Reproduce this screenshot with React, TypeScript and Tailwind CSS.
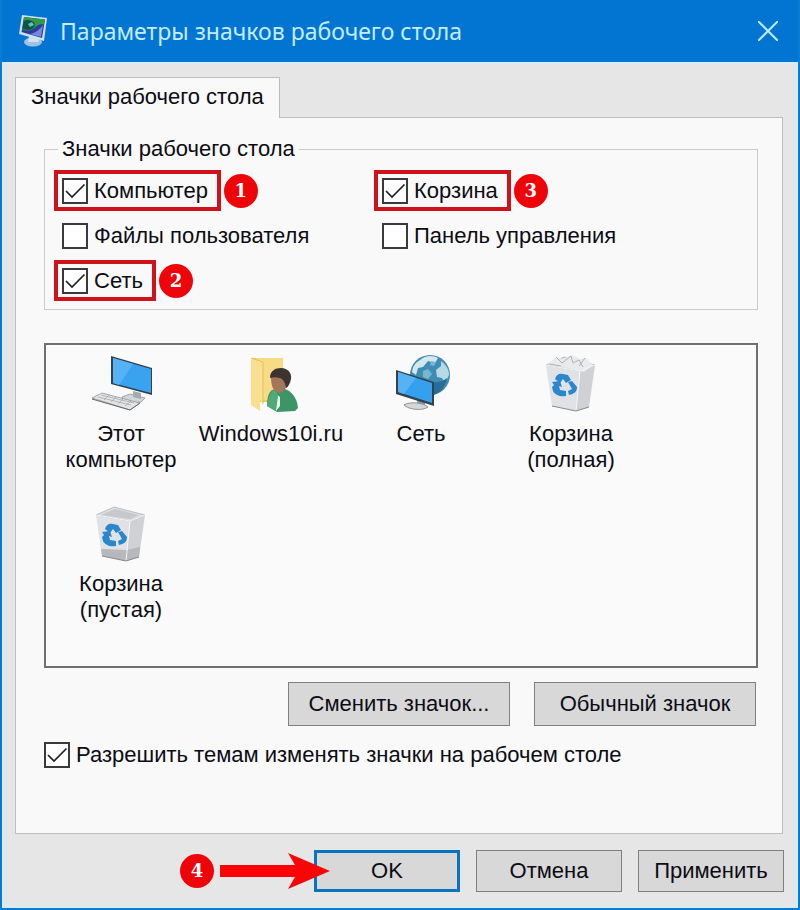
import { useState } from 'react'
import type { ReactNode } from 'react'

interface CheckOptionProps {
  id: string
  label: string
  initial?: boolean
  marker?: string
}

function CheckInput({ id, initial }: { id: string; initial: boolean }) {
  const [checked, setChecked] = useState(initial)

  return (
    <span className="relative block h-[26px] w-[26px] shrink-0">
      <input
        id={id}
        type="checkbox"
        checked={checked}
        onChange={(e) => setChecked(e.target.checked)}
        className="block h-[26px] w-[26px] appearance-none border-2 border-[#3a3a3a] bg-white"
      />
      {checked && (
        <svg viewBox="0 0 26 26" className="pointer-events-none absolute inset-0" fill="none" stroke="#222" strokeWidth="1.7">
          <path d="M4 13l6 6L22.500 6.500" />
        </svg>
      )}
    </span>
  )
}

function Badge({ children }: { children: ReactNode }) {
  return (
    <span className="flex h-[34px] w-[34px] shrink-0 items-center justify-center rounded-full bg-[#ee0509] font-['DejaVu_Serif',serif] text-[18px] leading-none font-bold text-white">
      {children}
    </span>
  )
}

function CheckOption({ id, label, initial = false, marker }: CheckOptionProps) {
  return (
    <div className="flex h-[45px] items-center gap-[3px]">
      <label
        htmlFor={id}
        className={`flex h-[41px] items-center gap-[6px] border-4 pr-[9px] pl-1 whitespace-nowrap ${marker ? 'border-[#d0131b]' : 'border-transparent'}`}
      >
        <CheckInput id={id} initial={initial} />
        {label}
      </label>
      {marker && <Badge>{marker}</Badge>}
    </div>
  )
}

function TitleIcon() {
  return (
    <svg viewBox="0 0 30 34" className="h-[34px] w-[30px]">
      <ellipse cx="15" cy="28" rx="9" ry="4.500" fill="#9fc3de" />
      <path d="M11 22h9l1 6H10z" fill="#d4e2ec" />
      <path d="M4 1l25 3-3 23L1 20z" fill="#cfe0ec" />
      <path d="M6 3l21 2.500-3 18.500L3.500 18z" fill="#2b3d9a" />
      <path d="M6 3l21 2.500-1 5c-5-1-7 1-10 4-4 3-8 2-12 1z" fill="#2f9c48" />
      <path d="M5.500 7c3-2 9-1 11 2 1 4-2 7-6 7l-6-1z" fill="#14504e" />
      <path d="M10 10l4-2 2 3-4 2z" fill="#5ac6b0" />
      <path d="M12 20c6-1 10-5 13-9l-2 12z" fill="#7a86dc" />
    </svg>
  )
}

function ComputerIcon() {
  return (
    <svg viewBox="0 0 64 60" className="h-[60px] w-16">
      <path d="M33 44l8-3 15 4-4 4-10 1-9-4z" fill="#d3d6d9" stroke="#888" strokeWidth=".7" />
      <path d="M44 38l8 2v6l-8-2z" fill="#a3abb0" />
      <path d="M22 3l41 12v27L22 31z" fill="#34414b" />
      <path d="M24 5l38 11v24L24 30z" fill="#3aa3ef" />
      <path d="M24 5l20 6-14 21-6-2z" fill="#55b2f3" />
      <path d="M3 45l10-5 38 10-10 7z" fill="#e2e4e6" stroke="#888" strokeWidth=".7" />
      <path d="M9 44l33 8M12 42l33 8M15 47l5-5M22 49l5-5M29 51l5-5M36 53l6-5" fill="none" stroke="#999" strokeWidth=".6" />
      <path d="M3 46l38 11 10-7" fill="none" stroke="#666" strokeWidth="1" />
    </svg>
  )
}

function UserFolderIcon() {
  return (
    <svg viewBox="0 0 64 60" className="h-[60px] w-16">
      <path d="M12 5h32v44H12z" fill="#efc95e" />
      <path d="M17 5h27v42H19z" fill="#f7dc85" />
      <path d="M12 5l12 4v42l-3-4v11l-9-6z" fill="#f9df90" />
      <path d="M12 5l12 4v42" fill="none" stroke="#dfb54b" strokeWidth=".7" />
      <path d="M28 53c0-12 3-18 13-18 10 1 17 8 18 20l-3 3-18 1z" fill="#3c9467" />
      <path d="M37 41l4 3v9l-4 5z" fill="#edf5ef" />
      <path d="M28 53c1-9 4-15 8-17l3 7-2 15z" fill="#51a879" />
      <path d="M32 24l16-4c3 7 0 18-7 20-6 0-9-6-9-16z" fill="#a4775d" />
      <path d="M31 25c0-7 5-10 11-10 7 0 11 5 10 11-1 5-3 8-5 9-1-6-3-9-6-10-4-1-7-1-10 0z" fill="#3d3430" />
    </svg>
  )
}

function NetworkIcon() {
  return (
    <svg viewBox="0 0 64 60" className="h-[60px] w-16">
      <circle cx="41" cy="22" r="20" fill="#3f8cb6" />
      <path d="M31 7c5-5 13-5 18-2l-3 5-7-2-5 6-5 1-2 7-4-3c1-6 3-9 8-12z" fill="#d4e7ed" />
      <path d="M52 8c5 4 8 8 8 14l-4 8-3-5-5-1-1-7 5-4z" fill="#b8d9e3" />
      <path d="M34 18l5-2 4 5-4 5-5-2zM42 8l5 1-2 4-4-1z" fill="#7ab7cd" />
      <path d="M44 29c6 1 10-1 14-4-1 8-6 14-13 17z" fill="#286d98" />
      <path d="M28 47l8 2v5h-8z" fill="#929ca2" />
      <path d="M15 52c6-4 20-2 24 2-5 4-19 3-24-2z" fill="#d5d8da" stroke="#7b8184" strokeWidth=".8" />
      <path d="M7 17l38 12v24L7 41z" fill="#34414b" />
      <path d="M9 19l34 11v20L9 39z" fill="#35a0ee" />
      <path d="M9 19l18 6-12 16-6-2z" fill="#55b2f3" />
    </svg>
  )
}

function RecycleMark() {
  return (
    <g fill="#2b87cb">
      <path d="M16 26c1-4 4-6 8-5l5 1 3 5-5 3-3-4-3 4z" />
      <path d="M29 29l4-1 5 6c0 5-3 7-8 8l-1-4 4-2z" />
      <path d="M13 29l8-1 2 6-3-1 1 4 6 1v5c-6 1-11-1-13-5l-1-4 2-2z" />
    </g>
  )
}

function BinIcon({ full = false }: { full?: boolean }) {
  return (
    <svg viewBox="0 0 64 60" className="h-[60px] w-16">
      <path d="M7 12l34 6-4 40-24-5z" fill="#e0e2e5" />
      <path d="M41 18l15-6-6 42-13 4z" fill="#cfd1d4" />
      {!full && <path d="M12 46l26 1 13-3-1 10-13 4-24-5z" fill="#b6b8bb" />}
      <path d="M7 12l18-8 31 8-15 6z" fill="#dcdee0" stroke="#b0b3b6" strokeWidth=".8" />
      <path d="M12 12l14-6 24 6-9 4z" fill="#c6c8cb" />
      {full && (
        <>
          <path d="M9 11l8-7 7 2 9-4 8 4 6-1 7 7-9 7-16-4z" fill="#e8eaeb" />
          <path d="M17 4l6 6 9-7 2 7 6-3 4 7M10 11l12 2M46 5l-6 8" fill="none" stroke="#a9adb0" strokeWidth=".9" />
        </>
      )}
      <path d="M7 12l34 6-4 40M41 18l15-6" fill="none" stroke="#f5f6f7" strokeWidth="1" />
      <path d="M13 53l24 5 13-4" fill="none" stroke="#85898d" strokeWidth="1" />
      <RecycleMark />
    </svg>
  )
}

const desktopIcons = [
  { lines: ['Этот', 'компьютер'], icon: <ComputerIcon /> },
  { lines: ['Windows10i.ru'], icon: <UserFolderIcon /> },
  { lines: ['Сеть'], icon: <NetworkIcon /> },
  { lines: ['Корзина', '(полная)'], icon: <BinIcon full /> },
  { lines: ['Корзина', '(пустая)'], icon: <BinIcon /> },
]

export default function App() {
  return (
    <div className="border-2 border-t-0 border-[#0b7cd4] bg-[#e6e6e6] font-['Liberation_Sans',sans-serif] text-[22px] leading-[26px] text-[#0c0c14]">
      <header className="flex h-[62px] items-center bg-[#0275d3] pr-5 pl-4">
        <TitleIcon />
        <h1 className="ml-3 flex-1 font-['Noto_Sans',sans-serif] text-[23px] text-[#c3ecff]">
          Параметры значков рабочего стола
        </h1>
        <button aria-label="Закрыть" className="h-5 w-5">
          <svg viewBox="0 0 20 20" fill="none" stroke="#bdeaff" strokeWidth="2">
            <path d="M0 0l20 20M20 0L0 20" />
          </svg>
        </button>
      </header>

      <main className="border-2 border-[#d3effb] px-[11px] pt-[13px] pb-[14px]">
        <div role="tablist" className="flex">
          <button
            role="tab"
            aria-selected="true"
            className="relative z-10 -mb-px h-[41px] border border-b-0 border-[#bdbdbd] bg-[#f9f9f9] px-[15px] pb-[3px] whitespace-nowrap"
          >
            Значки рабочего стола
          </button>
        </div>

        <section role="tabpanel" className="mr-[2px] border border-[#bdbdbd] bg-[#f9f9f9] pt-[18px] pr-6 pb-[65px] pl-7">
          <fieldset className="border border-[#cacaca] px-[9px] pb-[6px]">
            <legend className="ml-1 px-1">Значки рабочего стола</legend>
            <div className="grid grid-cols-[320px_1fr] pt-[6px]">
              <CheckOption id="computer" label="Компьютер" initial marker="1" />
              <CheckOption id="bin" label="Корзина" initial marker="3" />
              <CheckOption id="files" label="Файлы пользователя" />
              <CheckOption id="panel" label="Панель управления" />
              <CheckOption id="network" label="Сеть" initial marker="2" />
            </div>
          </fieldset>

          <ul className="mt-[33px] grid min-h-[325px] grid-cols-[repeat(4,150px)] grid-rows-[150px_150px] border-2 border-[#707070] bg-[#fafafa]">
            {desktopIcons.map(({ lines, icon }) => (
              <li key={lines.join(' ')} className="flex flex-col items-center pt-2 text-center">
                {icon}
                <span className="mt-2">
                  {lines.map((line) => (
                    <span key={line} className="block">{line}</span>
                  ))}
                </span>
              </li>
            ))}
          </ul>

          <div className="mt-[14px] mr-[2px] flex justify-end gap-6">
            <button className="h-11 w-[222px] border border-[#808080] bg-[#d8d8d8]">Сменить значок...</button>
            <button className="h-11 w-[222px] border border-[#808080] bg-[#d8d8d8]">Обычный значок</button>
          </div>

          <label htmlFor="themes" className="mt-4 flex items-center gap-[6px]">
            <CheckInput id="themes" initial />
            Разрешить темам изменять значки на рабочем столе
          </label>
        </section>

        <footer className="mt-4 mr-px flex items-center justify-end gap-4">
          <div className="relative z-10 -mr-8 flex items-center gap-[6px]">
            <Badge>4</Badge>
            <svg viewBox="0 0 110 36" className="pointer-events-none h-9 w-[110px]">
              <path d="M0 12h75L68 0l42 18-42 18 7-12H0z" fill="#fa0408" />
            </svg>
          </div>
          <button className="h-[42px] w-[146px] border-[3px] border-[#0873bf] bg-[#d8d8d8]">OK</button>
          <button className="h-[42px] w-[146px] border border-[#808080] bg-[#d8d8d8]">Отмена</button>
          <button className="h-[42px] w-[146px] border border-[#808080] bg-[#d8d8d8]">Применить</button>
        </footer>
      </main>
    </div>
  )
}
